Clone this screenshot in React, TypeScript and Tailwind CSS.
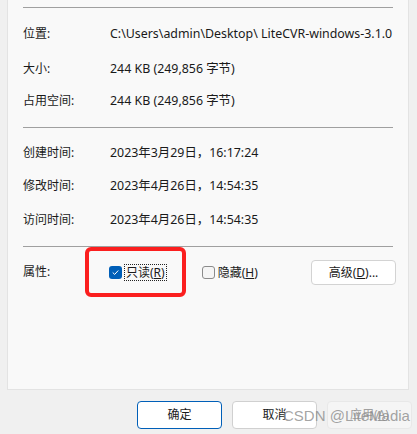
import React from 'react';

const font = { fontFamily: '"Noto Sans", "Noto Sans CJK SC", sans-serif' };

const Row: React.FC<{ label: string; value: React.ReactNode; className?: string }> = ({ label, value, className }) => (
  <div className={`flex h-[16px] items-center leading-[16px] ${className ?? ''}`}>
    <span className="w-[87px] shrink-0">{label}</span>
    <span className="whitespace-nowrap text-[12.4px]">{value}</span>
  </div>
);

const Divider: React.FC = () => <div className="h-px w-full bg-[#a0a0a0]" />;

const Check: React.FC<{ checked?: boolean }> = ({ checked }) =>
  checked ? (
    <span className="flex h-[13px] w-[13px] items-center justify-center rounded-[3px] bg-[#005fb8]">
      <svg width="9" height="9" viewBox="0 0 9 9" fill="none">
        <path d="M2 4.8 L3.7 6.4 L7 2.8" stroke="white" strokeWidth="1" strokeLinecap="round" strokeLinejoin="round" />
      </svg>
    </span>
  ) : (
    <span className="h-[13px] w-[13px] rounded-[3px] border border-[#8b8b8b] bg-[#f5f5f5]" />
  );

const App: React.FC = () => {
  return (
    <div className="relative h-[434px] w-[417px] overflow-hidden bg-[#f0f0f0] text-[12px] text-[#1a1a1a]" style={font}>
      <div className="ml-[7px] h-[390px] w-[402px] border-x border-b border-[#e3e3e3] bg-[#f9f9f9] px-[15px] pt-[7px]">
        <div className="w-[370px]">
          <Divider />
          <Row label="位置:" value="C:\Users\admin\Desktop\ LiteCVR-windows-3.1.0" className="mt-[18px]" />
          <Row label="大小:" value="244 KB (249,856 字节)" className="mt-[19px]" />
          <Row label="占用空间:" value="244 KB (249,856 字节)" className="mt-[16px]" />
          <div className="mt-[18px]">
            <Divider />
          </div>
          <Row label="创建时间:" value="2023年3月29日，16:17:24" className="mt-[17px]" />
          <Row label="修改时间:" value="2023年4月26日，14:54:35" className="mt-[17px]" />
          <Row label="访问时间:" value="2023年4月26日，14:54:35" className="mt-[18px]" />
          <div className="mt-[18px]">
            <Divider />
          </div>
          <div className="mt-[13px] flex h-[25px] items-center">
            <span className="w-[86px] shrink-0 -translate-y-[1px]">属性:</span>
            <div className="flex items-center gap-[2px]">
              <Check checked />
              <span className="border border-dotted border-[#222] px-px leading-[15px]">
                只读(<span className="underline">R</span>)
              </span>
            </div>
            <div className="ml-[35px] flex items-center gap-[3px]">
              <Check />
              <span>
                隐藏(<span className="underline">H</span>)
              </span>
            </div>
            <button className="ml-auto mr-[-3px] h-[25px] w-[85px] rounded-[4px] border border-[#d3d3d3] bg-white">
              高级(<span className="underline">D</span>)...
            </button>
          </div>
        </div>
      </div>

      <div className="mt-[11px] flex justify-end gap-[10px] pr-[5px]">
        <button className="h-[28px] w-[85px] rounded-[4px] border border-[#005fb8] bg-white">确定</button>
        <button className="h-[28px] w-[85px] rounded-[4px] border border-[#d0d0d0] bg-white">取消</button>
        <button className="h-[28px] w-[85px] rounded-[4px] border border-[#e8e8e8] bg-[#f5f5f5] text-[#a0a0a0]">
          应用(<span className="underline">A</span>)
        </button>
      </div>

      {/* annotation overlay */}
      <div className="absolute left-[85px] top-[247px] h-[50px] w-[101px] rounded-[6px] border-[4px] border-[#fb1f1f]" />
      <div
        className="absolute left-[283px] top-[405px] text-[15px] text-[#8c8c8c]/80"
        style={{ fontFamily: '"Liberation Sans", Arial, sans-serif' }}
      >
        CSDN @LiteMadia
      </div>
    </div>
  );
};

export default App;
